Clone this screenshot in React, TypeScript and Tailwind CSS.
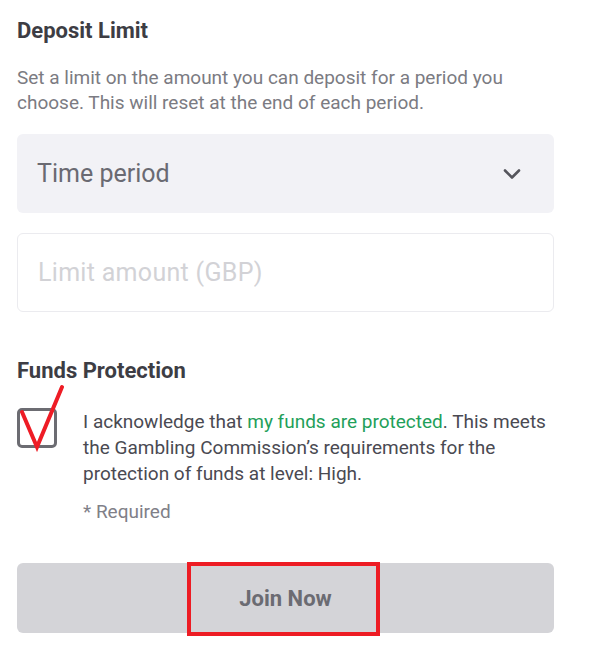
import React from "react";

export default function App() {
  return (
    <div className="w-[594px] h-[655px] bg-white overflow-hidden relative" style={{ fontFamily: "Roboto, 'Noto Sans', sans-serif" }}>
      <div className="px-[17px] pt-[17px] pr-[40px]">
        <h2 className="text-[22px] leading-[28px] font-bold text-[#3d3d44]">Deposit Limit</h2>
        <p className="mt-[20px] w-[530px] text-[19px] leading-[25px] text-[#7b7b82]">
          Set a limit on the amount you can deposit for a period you choose. This will reset at the end of each period.
        </p>
        <div className="mt-[19px] h-[79px] rounded-[6px] bg-[#f2f2f6] flex items-center justify-between pl-[20px] pr-[32px]">
          <span className="text-[25px] text-[#6a6a72]">Time period</span>
          <svg width="20" height="14" viewBox="0 0 20 14" fill="none">
            <path d="M3 3.5 L10 10.5 L17 3.5" stroke="#55555c" strokeWidth="2.6" strokeLinecap="round" strokeLinejoin="round" />
          </svg>
        </div>
        <div className="mt-[20px] h-[79px] rounded-[6px] border border-[#ebebef] flex items-center pl-[20px]">
          <span className="text-[25px] tracking-[0.3px] text-[#d2d2d6]">Limit amount (GBP)</span>
        </div>
        <h2 className="mt-[45px] text-[22px] leading-[28px] font-bold text-[#3d3d44]">Funds Protection</h2>
        <div className="mt-[24px] flex">
          <div className="relative w-[40px] h-[40px] shrink-0 mt-[-1px]">
            <div className="w-[40px] h-[40px] rounded-[5px] border-[3px] border-[#6c6c72]" />
            <svg className="absolute left-[0px] top-[-26px]" width="52" height="70" viewBox="0 0 52 70" fill="none">
              <path d="M5 30 L20 65 L45 5" stroke="#ee1c25" strokeWidth="4" strokeLinecap="round" strokeLinejoin="miter" />
            </svg>
          </div>
          <div className="ml-[26px] w-[472px]">
            <p className="text-[19px] leading-[26px] text-[#4a4a52]">
              I acknowledge that <span className="text-[#1fa05a]">my funds are protected</span>. This meets the Gambling Commission’s requirements for the protection of funds at level: High.
            </p>
            <p className="mt-[12px] text-[19px] leading-[26px] text-[#808088]">* Required</p>
          </div>
        </div>
        <div className="mt-[38px] relative h-[70px] rounded-[6px] bg-[#d4d4d8] flex items-center justify-center">
          <span className="text-[22px] font-bold text-[#6b6b72]">Join Now</span>
          <div className="absolute left-[170px] top-[-1px] w-[193px] h-[74px] border-[4px] border-[#ed1c24]" />
        </div>
      </div>
    </div>
  );
}
